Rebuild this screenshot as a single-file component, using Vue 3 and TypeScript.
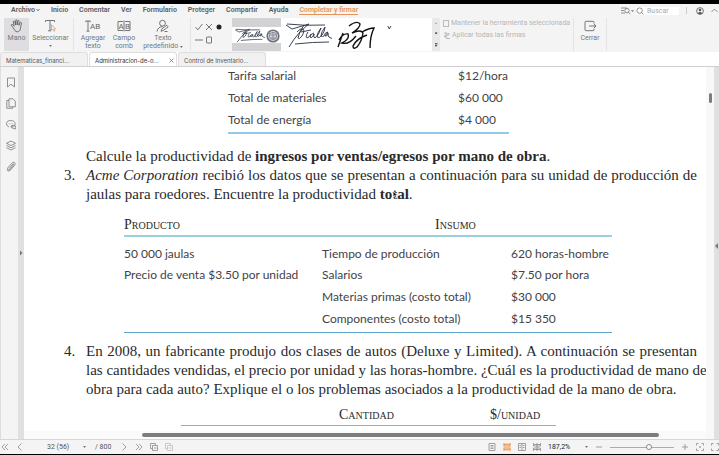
<script setup lang="ts">
import { ref } from 'vue'

const menus = ['Archivo', 'Inicio', 'Comentar', 'Ver', 'Formulario', 'Proteger', 'Compartir', 'Ayuda', 'Completar y firmar']
const tabs = [
  { title: 'Matematicas_financi...', active: false },
  { title: 'Administracion-de-o...', active: true },
  { title: 'Control de Inventario...', active: false },
]
const costs = [
  ['Tarifa salarial', '$12/hora'],
  ['Total de materiales', '$60 000'],
  ['Total de energía', '$4 000'],
]
const inputs = [
  ['50 000 jaulas', 'Tiempo de producción', '620 horas-hombre'],
  ['Precio de venta $3.50 por unidad', 'Salarios', '$7.50 por hora'],
  ['', 'Materias primas (costo total)', '$30 000'],
  ['', 'Componentes (costo total)', '$15 350'],
]
const signature =
  'M3 4q18 2 38 1M2 5l6 4 17-5M25 4Q14 12 5 27M20 5q-5 7-6 13 1 2 4-2 3-5 1-7-3-1-6 3M17 12l10-2M24 12q-3 5-1 6 2 0 4-4M30 13q-4 1-4 4 2 2 4-3-1 4 1 4 4-3 6-10-4 5-4 9 2 2 5-2 3-4 3-8-4 5-4 9 1 1 3 0 1-4 4-4-3 4-3 4 2 1 3-3 0 4 1 4l4 2M11 24q18-2 34-2'
const page = ref('32 (56)')
const search = ref('')
const keepTool = ref(false)
const zoom = ref(62)
</script>

<template>
  <div class="app">
    <header class="menubar">
      <nav class="menus">
        <a v-for="m in menus" :key="m" href="#" :class="{ current: m === 'Completar y firmar' }">{{ m }}<svg v-if="m === 'Archivo'" class="chev" viewBox="0 0 4 4"><path d="M.5 1 2 2.8 3.5 1" /></svg></a>
      </nav>
      <div class="account">
        <button aria-label="Modo de búsqueda">
          <svg width="13" height="8" viewBox="0 0 13 8"><path d="M0 1h6M0 3.5h3M0 6h4" /><circle cx="6" cy="3.6" r="2.2" /><path d="m7.5 5.3 1.7 1.8" /><path class="solid" d="M10 3.2h3l-1.500 1.800z" /></svg>
        </button>
        <label class="search">
          <svg width="8" height="8" viewBox="0 0 8 8"><circle cx="3.600" cy="3.600" r="2.700" /><path d="m5.600 5.600 1.800 1.900" /></svg>
          <input v-model="search" type="search" placeholder="Buscar" aria-label="Buscar" />
        </label>
        <span class="bar"></span>
        <button aria-label="Cuenta">
          <svg class="user" width="8" height="8" viewBox="0 0 8 8"><circle cx="4" cy="4" r="3.400" /><circle class="solid" cx="4" cy="3" r="1.300" /><path class="solid" d="M1.700 6.200Q4 3.800 6.300 6.200 4 8.200 1.700 6.200" /></svg>
        </button>
        <button aria-label="Contraer">
          <svg width="7" height="5" viewBox="0 0 7 5"><path d="m.5 4 3-3 3 3" /></svg>
        </button>
      </div>
    </header>

    <section class="ribbon">
      <button class="tool hand">
        <svg width="14" height="14" viewBox="0 0 14 14"><path d="M3.500 9 1.500 6.700c-.8-1 .5-1.800 1.200-1l1.500 1.500L3.300 3c-.2-1.100 1.200-1.300 1.500-.3l.8 3.300V1.700c0-1.100 1.500-1.100 1.500 0V6l.6-3.800c.2-1 1.600-.8 1.500.2L8.900 6.300l1.200-2.500c.5-.9 1.700-.4 1.400.5-.6 2-.7 3.500-1.100 5.500-.3 1.800-1.300 3-3.200 3-2 0-2.500-1.500-3.700-3.800" /></svg>
        <span>Mano</span>
      </button>
      <button class="tool select">
        <svg width="13" height="14" viewBox="0 0 13 14"><path d="M1.500 3V1.500h9V3M6 1.500v10M4 11.800h3" /><path class="orange" d="M7.500 5.800v5.500l1.300-1 1 2 1-.5-.9-2h1.700z" /></svg>
        <span>Seleccionar</span>
        <i class="caret"></i>
      </button>
      <span class="rule"></span>
      <button class="tool add">
        <svg width="16" height="14" viewBox="0 0 16 14"><path d="M.8 3V2h4.400v1M3 2v10M1.500 12.200h3" /><text x="5" y="10">AB</text></svg>
        <span>Agregar<br />texto</span>
      </button>
      <button class="tool field">
        <svg width="14" height="14" viewBox="0 0 14 14"><path d="M6 2.500H1v9h5M8 2.500h5v9H8M7 1.500v11" /><text x="1.500" y="10">A</text><text x="8" y="10">B</text></svg>
        <span>Campo<br />comb</span>
      </button>
      <button class="tool preset">
        <svg width="14" height="14" viewBox="0 0 14 14"><circle cx="6.500" cy="4.200" r="2.900" /><path d="M1 12.500c.5-3.500 3-4.800 5.500-4.800M5 12.300l1-2.500 4.800-3.600 1.400 1.700-4.800 3.500zM8.500 12.500h3" /></svg>
        <span>Texto<br />predefinido <i class="caret"></i></span>
      </button>
      <span class="rule"></span>
      <div class="marks">
        <button aria-label="Marca"><svg viewBox="0 0 8 8"><path d="m.6 4.200 2.200 2.600L7.400 1" /></svg></button>
        <button aria-label="Cruz"><svg viewBox="0 0 8 8"><path d="m1 1 6 6M7 1 1 7" /></svg></button>
        <button aria-label="Punto"><svg viewBox="0 0 8 8"><circle class="dot" cx="4" cy="4" r="2.500" /></svg></button>
        <button aria-label="Línea"><svg viewBox="0 0 8 8"><path d="M0 4h8" /></svg></button>
        <button aria-label="Rectángulo"><svg viewBox="0 0 8 8"><rect x="1.500" y="1" width="5" height="6" rx=".5" /></svg></button>
      </div>
      <div class="gallery">
        <button class="sig chosen" aria-label="Firma con sello">
          <svg width="49" height="16" viewBox="0 0 49 16">
            <g transform="translate(2 0) scale(.63 .56)"><path class="ink small" :d="signature" /></g>
            <circle class="stamp" cx="41" cy="9" r="5.800" /><circle class="seal" cx="41" cy="9" r="3.700" /><path class="seal" d="M38 8h6M38 11h6M41 5v7M36 5l2 2M46 5l-2 2" />
          </svg>
        </button>
        <button class="sig" aria-label="Firma completa">
          <svg width="48" height="30" viewBox="0 0 48 30"><path class="ink" :d="signature" /></svg>
        </button>
        <button class="sig" aria-label="Rúbrica">
          <svg width="44" height="30" viewBox="0 0 44 30"><path class="ink thick" d="M8 13 3 27M4 20q4-7 9-6 2 5-6 9 7 2 14-7M14 6q8-6 11-2 0 4-8 9 9-4 11 0-1 8-6 14-4 3-4-1 3-7 14-11M27 12q7-4 12-4-4 8-4 20" /></svg>
        </button>
        <button class="sig tick" aria-label="Firma breve"><svg width="5" height="5" viewBox="0 0 5 5"><path class="ink" d="m.8 1 1.500 3L4 1" /></svg></button>
      </div>
      <div class="steps">
        <button aria-label="Anterior"><i class="caret up"></i></button>
        <button aria-label="Siguiente"><i class="caret"></i></button>
        <button aria-label="Más firmas"><i class="caret more"></i></button>
      </div>
      <div class="options">
        <label><input v-model="keepTool" type="checkbox" />Mantener la herramienta seleccionada</label>
        <button><svg width="7" height="7" viewBox="0 0 7 7"><path d="M1 1h3L1 5M2 5l3.500-4L6.500 2 3 5.500zM3 6.500h4" /></svg>Aplicar todas las firmas</button>
      </div>
      <span class="rule"></span>
      <button class="tool close">
        <svg width="13" height="14" viewBox="0 0 13 14"><path d="M10 4.500V3.300q0-1-1-1H2q-1 0-1 1v7.400q0 1 1 1h7q1 0 1-1V9.500M5 7h7M10 5l2 2-2 2" /></svg>
        <span>Cerrar</span>
      </button>
      <span class="rule"></span>
    </section>

    <div class="tabs">
      <button v-for="t in tabs" :key="t.title" class="tab" :class="{ active: t.active }">
        <span>{{ t.title }}</span>
        <svg v-if="t.active" width="5" height="5" viewBox="0 0 5 5"><path d="m.5.5 4 4M4.500.5l-4 4" /></svg>
      </button>
    </div>

    <div class="work">
      <aside class="side">
        <button aria-label="Marcadores"><svg viewBox="0 0 10 11"><path d="M1.500 1h7v9L5 7.200 1.500 10z" /></svg></button>
        <button aria-label="Páginas"><svg viewBox="0 0 10 11"><path d="M3 .8h4l2.300 2.300v5.700H3zM3 2.500H.8v7.800h5.800V8.800" /></svg></button>
        <button aria-label="Comentarios"><svg viewBox="0 0 10 11"><path d="M3 8Q.5 7 .5 4.700C.5 2.500 2.300 1.500 4.700 1.500s4.500 1 4.500 3.200S7 8 4.700 8M5 7q2-1.500 4.500 0 .2 1.500-.5 2l.5 1-1.500-.5Q5.500 9.500 5 7M2.800 4.800h.6M4.600 4.800h.6M6.400 4.800h.6" /></svg></button>
        <button aria-label="Capas"><svg viewBox="0 0 10 11"><path d="m5 1 4.500 2.300L5 5.600.5 3.300zM.5 5.500 5 7.800l4.500-2.300M.5 7.700 5 10l4.500-2.300" /></svg></button>
        <button aria-label="Adjuntos"><svg viewBox="0 0 10 11"><path d="M3 7.500 7 3q1-.5.700.7L3.800 8.500Q2 9.700 1.500 8q0-1 .8-1.800L6.500 1.600Q8.500.500 9.200 2.500q0 1-.7 1.800L4.200 9.400Q2 11 1 9" /></svg></button>
      </aside>
      <div class="handle"><i></i></div>

      <div class="viewer">
        <main class="page">
          <table class="data costs">
            <tbody>
              <tr v-for="r in costs" :key="r[0]"><td>{{ r[0] }}</td><td>{{ r[1] }}</td></tr>
            </tbody>
          </table>

          <p class="lead">Calcule la productividad de <b>ingresos por ventas/egresos por mano de obra</b>.</p>
          <div class="item">
            <span>3.</span>
            <div>
              <p class="full"><em>Acme Corporation</em> recibió los datos que se presentan a continuación para su unidad de producción de</p>
              <p>jaulas para roedores. Encuentre la productividad <b class="pointed">total<svg class="pointer" width="7" height="9" viewBox="0 0 7 9"><path d="M1 1v6l1.500-1.300L3.600 8.300l1.200-.5-1-2.400H6z" /></svg></b>.</p>
            </div>
          </div>

          <table class="data inputs">
            <colgroup><col class="product" /><col class="concept" /><col /></colgroup>
            <thead>
              <tr><th>Producto</th><th colspan="2">Insumo</th></tr>
            </thead>
            <tbody>
              <tr v-for="r in inputs" :key="r[1]"><td v-for="(c, i) in r" :key="i">{{ c }}</td></tr>
            </tbody>
          </table>

          <div class="item">
            <span>4.</span>
            <div>
              <p class="full">En 2008, un fabricante produjo dos clases de autos (Deluxe y Limited). A continuación se presentan</p>
              <p class="full">las cantidades vendidas, el precio por unidad y las horas-hombre. ¿Cuál es la productividad de mano de</p>
              <p>obra para cada auto? Explique el o los problemas asociados a la productividad de la mano de obra.</p>
            </div>
          </div>

          <table class="data sales">
            <thead>
              <tr><td></td><th>Cantidad</th><th>$/unidad</th></tr>
            </thead>
          </table>
        </main>
        <div class="hscroll"><i></i></div>
      </div>
      <div class="vscroll"><i></i></div>
      <div class="panel"><i></i></div>
    </div>

    <footer class="status">
      <div class="pager">
        <button aria-label="Primera página"><svg viewBox="0 0 8 8"><path d="M4 1 1 4l3 3M7 1 4 4l3 3" /></svg></button>
        <button aria-label="Página anterior"><svg viewBox="0 0 8 8"><path d="M5.500.5 2 4l3.500 3.500" /></svg></button>
        <input v-model="page" aria-label="Página" />
        <i class="caret"></i>
        <span>/ 800</span>
        <button aria-label="Página siguiente"><svg viewBox="0 0 8 8"><path d="M2.500.5 6 4 2.500 7.500" /></svg></button>
        <button aria-label="Última página"><svg viewBox="0 0 8 8"><path d="m1 1 3 3-3 3M4 1l3 3-3 3" /></svg></button>
        <button aria-label="Vista anterior"><svg viewBox="0 0 8 8"><path d="M2.500 5.500h-2v-5h5v2M2.500 2.500h5v5h-5zM4 5h2.500" /></svg></button>
        <button class="off" aria-label="Vista siguiente"><svg viewBox="0 0 8 8"><path d="M2.500 5.500h-2v-5h5v2M2.500 2.500h5v5h-5zM4 5h2.500" /></svg></button>
      </div>
      <div class="view">
        <button aria-label="Una página"><svg viewBox="0 0 8 8"><path d="M1 .5h6v7H1zM2.500 2.500h3M2.500 4h3M2.500 5.500h3" /></svg></button>
        <button class="on" aria-label="Continua"><svg viewBox="0 0 8 8"><path d="M1 0v3h6V0M1 8V5h6v3M1 1.500h6M1 6.500h6" /></svg></button>
        <button aria-label="Dos páginas"><svg viewBox="0 0 8 8"><path d="M.5.5h7v7h-7zM4 .5v7M1.500 2.500H3M1.500 4.500H3M5 2.500h1.500M5 4.500h1.500" /></svg></button>
        <button aria-label="Dos páginas continuas"><svg viewBox="0 0 8 8"><path d="M.5 0v3h7V0M.5 8V5h7v3M4 0v8M.5 1.500h7M.5 6.500h7" /></svg></button>
        <select aria-label="Zoom"><option>187,2%</option></select>
        <i class="caret"></i>
        <button aria-label="Alejar"><svg viewBox="0 0 8 8"><path d="M1 4h6" /></svg></button>
        <input v-model="zoom" type="range" min="0" max="100" aria-label="Nivel de zoom" />
        <button aria-label="Acercar"><svg viewBox="0 0 8 8"><path d="M1 4h6M4 1v6" /></svg></button>
        <button aria-label="Ajustar"><svg viewBox="0 0 8 8"><path d="M.5 2.500v-2h2M5.500.5h2v2M7.500 5.500v2h-2M2.500 7.500h-2v-2M4 3.200v1.600M3.200 4h1.600" /></svg></button>
        <button aria-label="Pantalla completa"><svg viewBox="0 0 8 8"><path d="M.5 2.500v-2h2M5.500.5h2v2M7.500 5.500v2h-2M2.500 7.500h-2v-2" /></svg></button>
      </div>
    </footer>
  </div>
</template>

<style>
body {
  background: #000;
  overflow: hidden;
}
</style>

<style scoped>
* {
  box-sizing: border-box;
}
.app {
  height: 100vh;
  display: flex;
  flex-direction: column;
  border-top: 4px solid #000;
  border-bottom: 1px solid #000;
  background: #f4f4f5;
  color: #555;
  font: 7px/8px Roboto, 'Liberation Sans', sans-serif;
}
button,
input,
select {
  margin: 0;
  padding: 0;
  border: 0;
  background: none;
  color: inherit;
  font: inherit;
  outline: 0;
}
button {
  display: flex;
  align-items: center;
  justify-content: center;
}
svg {
  flex: none;
  fill: none;
  stroke: #777;
  stroke-width: 0.8;
}
svg text {
  fill: #666;
  stroke: none;
  font-size: 8px;
}
.solid {
  fill: #777;
  stroke: none;
}
.caret {
  display: inline-block;
  flex: none;
  width: 3px;
  height: 2px;
  background: #777;
  clip-path: polygon(0 0, 100% 0, 50% 100%);
}
.menubar {
  flex: none;
  height: 13px;
  display: flex;
  justify-content: space-between;
  align-items: center;
  padding: 0 1px 0 11px;
}
.menus {
  display: flex;
  gap: 11px;
  font-weight: 600;
}
.menus a {
  color: #5c5c5c;
  text-decoration: none;
  border-bottom: 1px solid transparent;
  white-space: nowrap;
}
.menus .current {
  color: #e8935a;
  border-color: #e8935a;
}
.chev {
  width: 4px;
  height: 4px;
  margin-left: 1px;
  stroke: #555;
}
.account {
  display: flex;
  align-items: center;
  gap: 2px;
}
.search {
  display: flex;
  align-items: center;
  gap: 3px;
  background: #fff;
}
.search input {
  width: 32px;
  height: 8px;
  appearance: none;
}
.search input::placeholder {
  color: #aaa;
}
.bar {
  width: 1px;
  height: 7px;
  margin: 0 7px 0 5px;
  background: #ccc;
}
.user {
  margin-right: 5px;
  stroke: #555;
}
.user .solid {
  fill: #555;
}
.ribbon {
  flex: none;
  height: 35px;
  display: flex;
  align-items: stretch;
  padding: 1px 0 1px 4px;
}
.tool {
  flex: none;
  flex-direction: column;
  justify-content: flex-start;
  padding-top: 1px;
  line-height: 8px;
  color: #777;
  white-space: nowrap;
}
.tool > svg {
  stroke: #555;
  margin-bottom: 1px;
}
.tool .orange {
  stroke: #e8a050;
}
.hand {
  width: 25px;
  background: #dedee0;
}
.select {
  width: 43px;
}
.select .caret {
  margin-top: 3px;
}
.add {
  width: 36px;
}
.field {
  width: 26px;
}
.preset {
  width: 52px;
}
.close {
  width: 30px;
}
.rule {
  flex: none;
  width: 1px;
  margin: 0 1px;
  background: #e4e4e6;
}
.marks {
  flex: none;
  width: 40px;
  padding: 2px 8px 4px 2px;
  display: grid;
  grid-template-columns: repeat(3, 1fr);
}
.marks svg {
  width: 8px;
  height: 8px;
  stroke: #555;
}
.marks .dot {
  fill: #222;
  stroke: none;
}
.gallery {
  flex: none;
  width: 200px;
  display: flex;
  background: #fff;
}
.sig.chosen {
  background: #d2d2d4;
}
.sig.chosen svg {
  background: #fff;
}
.sig + .sig {
  padding-left: 3px;
}
.sig + .tick {
  align-items: flex-start;
  padding: 7px 0 0 8px;
}
.ink {
  stroke: #273044;
  stroke-width: 0.9;
}
.small {
  stroke-width: 1.2;
}
.thick {
  stroke: #111;
  stroke-width: 1.4;
}
.stamp {
  fill: #d5d6dc;
  stroke: #6b6f7c;
  stroke-width: 1.6;
}
.seal {
  stroke: #7d818c;
}
.steps {
  flex: none;
  width: 8px;
  display: grid;
  background: #e9e9eb;
}
.steps .caret {
  background: #333;
}
.steps .up {
  background: #aaa;
  clip-path: polygon(50% 0, 100% 100%, 0 100%);
}
.steps .more {
  height: 4px;
  clip-path: polygon(0 0, 100% 0, 100% 25%, 0 25%, 0 50%, 100% 50%, 50% 100%, 0 50%);
}
.options {
  flex: none;
  width: 132px;
  padding: 1px 0 0 3px;
  display: flex;
  flex-direction: column;
  gap: 4px;
  color: #b4b4b6;
  white-space: nowrap;
}
.options label,
.options button {
  display: flex;
  align-items: center;
  justify-content: flex-start;
  gap: 2px;
  height: 8px;
}
.options svg {
  stroke: #aaa;
}
.options input {
  appearance: none;
  width: 6px;
  height: 7px;
  border: 1px solid #bbb;
}
.tabs {
  flex: none;
  height: 15px;
  display: flex;
  gap: 1px;
  background: #fff;
  border-bottom: 1px solid #d0d0d2;
}
.tab {
  width: 88px;
  padding: 2px 2px 0 5px;
  justify-content: space-between;
  white-space: nowrap;
  color: #555;
  background: #f1f1f2;
  border: 1px solid #dedee0;
  border-bottom: 0;
  border-radius: 3px 3px 0 0;
  font: 6px/8px Inter, sans-serif;
}
.active {
  color: #333;
  background: #fff;
}
.work {
  flex: 1;
  min-height: 0;
  display: flex;
}
.side {
  flex: none;
  width: 18px;
  padding: 10px 0 0 2px;
  display: flex;
  flex-direction: column;
  align-items: center;
  gap: 10px;
  border-left: 1px solid #ddd;
}
.side svg {
  width: 10px;
  height: 11px;
}
.handle,
.panel {
  flex: none;
  width: 6px;
  display: flex;
  align-items: center;
  justify-content: center;
  background: #e0e0e1;
}
.panel {
  width: 5px;
  padding-bottom: 14px;
}
.handle i,
.panel i {
  width: 3px;
  height: 6px;
  background: #777;
  clip-path: polygon(0 0, 100% 50%, 0 100%);
}
.panel i {
  clip-path: polygon(100% 0, 0 50%, 100% 100%);
}
.viewer {
  flex: 1;
  min-width: 0;
  display: flex;
  flex-direction: column;
  background: #fff;
}
.page {
  flex: 1;
  min-height: 0;
  overflow: hidden;
  padding: 0 9px 0 40px;
  color: #2a2a2c;
  font: 15px/19px 'Liberation Serif', serif;
}
.page p {
  margin: 0;
  white-space: nowrap;
}
.page .full {
  text-align: justify;
  text-align-last: justify;
}
.page .lead {
  padding: 13px 0 0 22px;
}
.item {
  display: grid;
  grid-template-columns: 22px minmax(0, 1fr);
}
.pointed {
  position: relative;
}
.pointer {
  position: absolute;
  left: 12px;
  top: 4px;
  stroke: #fff;
  fill: #222;
}
.data {
  border-collapse: collapse;
  table-layout: fixed;
}
.data td {
  height: 22px;
  padding: 0;
  color: #434346;
  font: 12px/20px Lato, sans-serif;
  white-space: nowrap;
}
.data th {
  height: 22px;
  padding: 0;
  font-size: 14px;
  font-weight: 400;
  font-variant: small-caps;
  text-align: left;
}
.data tbody tr:last-child td {
  height: 24px;
  padding-bottom: 2px;
}
.costs {
  width: 281px;
  margin: -2px 0 0 164px;
  border-bottom: 2px solid #8fcbe8;
}
.costs td:first-child {
  width: 230px;
}
.inputs {
  width: 488px;
  margin: 10px 0 9px 60px;
  border-bottom: 1px solid #5aa5c8;
}
.inputs thead {
  border-bottom: 2px solid #9dd0de;
}
.product {
  width: 198px;
}
.concept {
  width: 189px;
}
.inputs th + th {
  padding-left: 113px;
}
.inputs tbody tr:first-child td {
  height: 28px;
  padding-top: 6px;
}
.sales {
  width: 375px;
  margin: 5px 0 0 117px;
  border-bottom: 1px solid #6fbed2;
}
.sales td {
  width: 158px;
}
.sales th:nth-child(2) {
  width: 151px;
}
.hscroll {
  flex: none;
  height: 8px;
  padding: 2px 47px 0 118px;
  background: #fafafa;
}
.hscroll i {
  display: block;
  height: 4px;
  border-radius: 2px;
  background: #7c7c7e;
}
.vscroll {
  flex: none;
  width: 8px;
  padding: 26px 2px 0 3px;
  background: #f8f8f8;
}
.vscroll i {
  display: block;
  height: 10px;
  border-radius: 2px;
  background: #7c7c7e;
}
.status {
  flex: none;
  height: 15px;
  display: flex;
  align-items: center;
  justify-content: space-between;
  border-top: 1px solid #d6d6d8;
}
.pager,
.view {
  display: flex;
  align-items: center;
  gap: 7px;
}
.pager {
  padding-left: 1px;
}
.status svg {
  width: 8px;
  height: 8px;
  stroke: #8c8c8c;
}
.pager input {
  width: 40px;
  margin-left: 5px;
  padding-left: 11px;
}
.pager input + .caret {
  margin-right: 2px;
}
.pager span {
  margin-right: 2px;
}
.off {
  opacity: 0.5;
}
.on {
  background: #fbd9b5;
}
.status .on svg {
  stroke: #e8935a;
}
.view select {
  width: 30px;
  appearance: none;
  color: #222;
}
.view input {
  appearance: none;
  width: 64px;
  height: 8px;
  background: linear-gradient(#aaa, #aaa) center / 100% 1px no-repeat;
}
.view input::-webkit-slider-thumb {
  appearance: none;
  width: 6px;
  height: 6px;
  border: 1px solid #888;
  border-radius: 50%;
  background: #fff;
}
</style>
